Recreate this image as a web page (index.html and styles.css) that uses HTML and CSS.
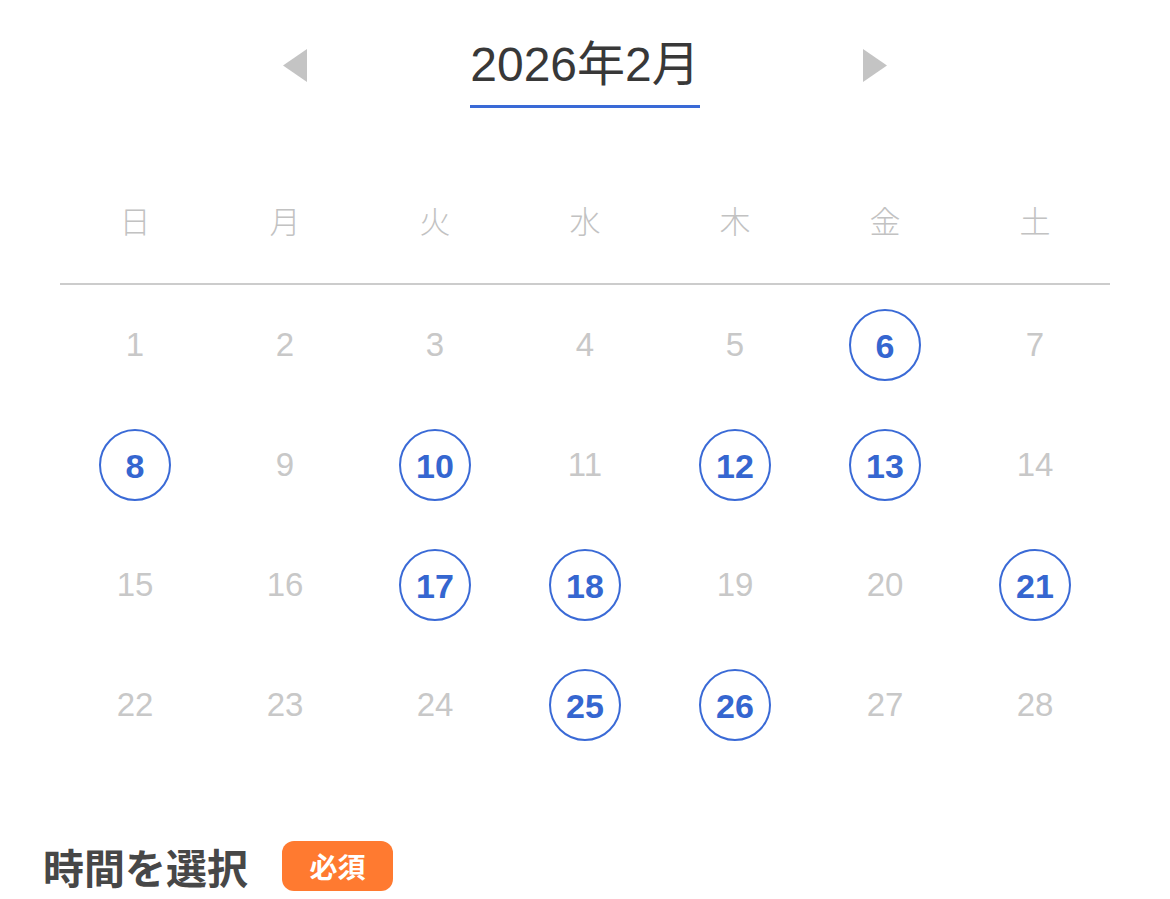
FILE: index.html
```html
<!DOCTYPE html>
<html lang="ja">
<head>
<meta charset="utf-8">
<title>カレンダー</title>
<link rel="stylesheet" href="styles.css">
</head>
<body>
<div class="page">
  <div class="month-nav">
    <button class="arrow" aria-label="前の月">
      <svg width="24" height="33" viewBox="0 0 24 33"><polygon points="24,0 24,33 0,16.5" fill="#c4c4c4"/></svg>
    </button>
    <div class="month-title">2026年2月</div>
    <button class="arrow" aria-label="次の月">
      <svg width="24" height="33" viewBox="0 0 24 33"><polygon points="0,0 0,33 24,16.5" fill="#c4c4c4"/></svg>
    </button>
  </div>

  <div class="calendar">
    <div class="weekdays">
      <div class="wd">日</div><div class="wd">月</div><div class="wd">火</div><div class="wd">水</div><div class="wd">木</div><div class="wd">金</div><div class="wd">土</div>
    </div>
    <div class="days">
      <div class="day"><span class="num">1</span></div>
      <div class="day"><span class="num">2</span></div>
      <div class="day"><span class="num">3</span></div>
      <div class="day"><span class="num">4</span></div>
      <div class="day"><span class="num">5</span></div>
      <div class="day"><span class="num avail">6</span></div>
      <div class="day"><span class="num">7</span></div>

      <div class="day"><span class="num avail">8</span></div>
      <div class="day"><span class="num">9</span></div>
      <div class="day"><span class="num avail">10</span></div>
      <div class="day"><span class="num">11</span></div>
      <div class="day"><span class="num avail">12</span></div>
      <div class="day"><span class="num avail">13</span></div>
      <div class="day"><span class="num">14</span></div>

      <div class="day"><span class="num">15</span></div>
      <div class="day"><span class="num">16</span></div>
      <div class="day"><span class="num avail">17</span></div>
      <div class="day"><span class="num avail">18</span></div>
      <div class="day"><span class="num">19</span></div>
      <div class="day"><span class="num">20</span></div>
      <div class="day"><span class="num avail">21</span></div>

      <div class="day"><span class="num">22</span></div>
      <div class="day"><span class="num">23</span></div>
      <div class="day"><span class="num">24</span></div>
      <div class="day"><span class="num avail">25</span></div>
      <div class="day"><span class="num avail">26</span></div>
      <div class="day"><span class="num">27</span></div>
      <div class="day"><span class="num">28</span></div>
    </div>
  </div>

  <div class="time-section">
    <h2 class="time-title">時間を選択</h2>
    <span class="badge">必須</span>
  </div>
</div>
</body>
</html>
```
FILE: styles.css
```css
* { box-sizing: border-box; }
html, body { margin: 0; padding: 0; background: #fff; }
body {
  font-family: "Liberation Sans", "Noto Sans CJK JP", sans-serif;
  width: 1170px;
  height: 899px;
  overflow: hidden;
}
.page { padding-top: 37px; }

.month-nav {
  display: flex;
  justify-content: center;
  align-items: center;
  gap: 163px;
}
.arrow {
  border: 0;
  background: none;
  padding: 0;
  width: 24px;
  height: 33px;
  display: flex;
  margin-top: -14px;
}
.month-title {
  font-size: 48px;
  line-height: 56px;
  color: #383838;
  padding: 0 0 12px 0;
  border-bottom: 3px solid #3a6ad6;
  width: 230px;
  text-align: center;
  white-space: nowrap;
}

.calendar {
  margin: 55px 60px 0 60px;
}
.weekdays {
  display: grid;
  grid-template-columns: repeat(7, 1fr);
  height: 122px;
  border-bottom: 2px solid #cccccc;
}
.wd {
  display: flex;
  align-items: center;
  justify-content: center;
  font-family: "Noto Sans CJK JP", sans-serif;
  font-weight: 300;
  font-size: 31px;
  color: #c2c2c2;
  padding-bottom: 8px;
}
.days {
  display: grid;
  grid-template-columns: repeat(7, 1fr);
  grid-auto-rows: 120px;
}
.day {
  display: flex;
  align-items: center;
  justify-content: center;
}
.num {
  font-size: 33px;
  color: #c8c8c8;
  width: 72px;
  height: 72px;
  display: flex;
  align-items: center;
  justify-content: center;
}
.num.avail {
  border: 2.7px solid #3a6ad6;
  border-radius: 50%;
  color: #3566d0;
  font-weight: 700;
  font-size: 34px;
  padding-top: 3px;
}

.time-section {
  display: flex;
  align-items: center;
  gap: 34px;
  margin-top: 76px;
  padding-left: 43px;
}
.time-title {
  margin: 0;
  font-family: "Noto Sans CJK JP", sans-serif;
  font-size: 41px;
  font-weight: 700;
  color: #474747;
  line-height: 50px;
}
.badge {
  display: inline-flex;
  align-items: center;
  justify-content: center;
  width: 111px;
  height: 50px;
  background: #ff7a30;
  color: #fff;
  border-radius: 12px;
  font-family: "Noto Sans CJK JP", sans-serif;
  font-weight: 700;
  font-size: 28px;
}
```
